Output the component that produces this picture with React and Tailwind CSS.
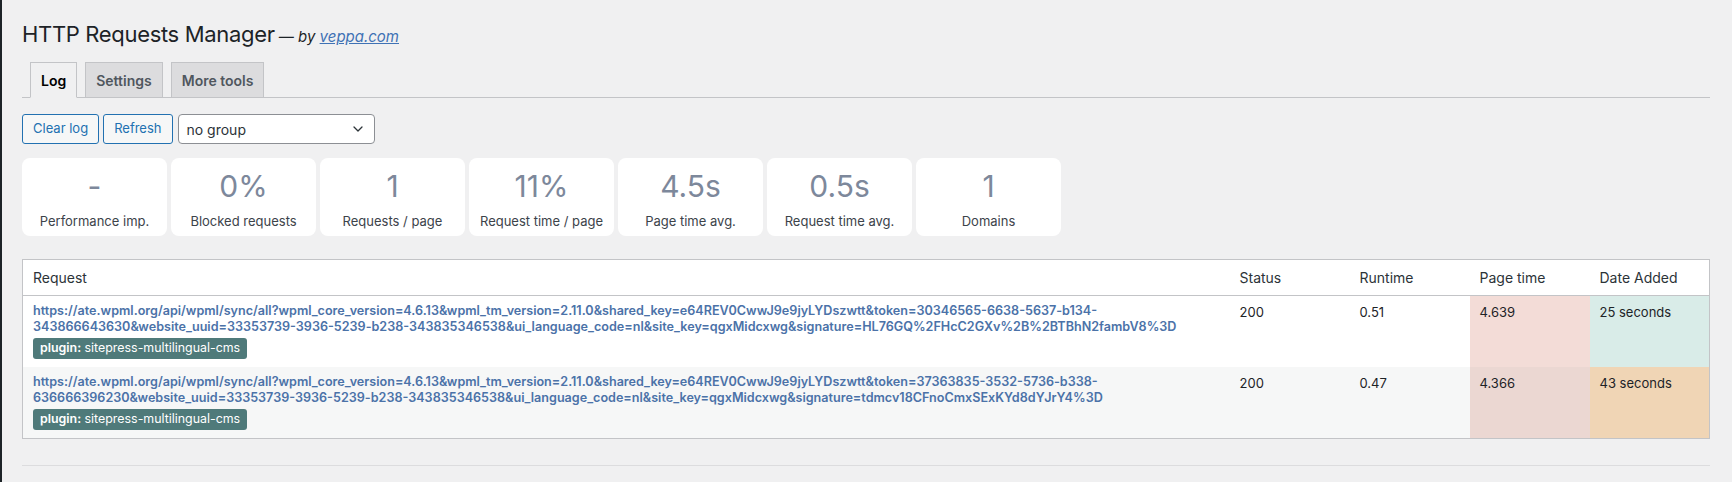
import React from "react";

const stats = [
  { value: "-", label: "Performance imp." },
  { value: "0%", label: "Blocked requests" },
  { value: "1", label: "Requests / page" },
  { value: "11%", label: "Request time / page" },
  { value: "4.5s", label: "Page time avg." },
  { value: "0.5s", label: "Request time avg." },
  { value: "1", label: "Domains" },
];

const rows = [
  {
    url1: "https://ate.wpml.org/api/wpml/sync/all?wpml_core_version=4.6.13&wpml_tm_version=2.11.0&shared_key=e64REV0CwwJ9e9jyLYDszwtt&token=30346565-6638-5637-b134-",
    url2: "343866643630&website_uuid=33353739-3936-5239-b238-343835346538&ui_language_code=nl&site_key=qgxMidcxwg&signature=HL76GQ%2FHcC2GXv%2B%2BTBhN2fambV8%3D",
    status: "200",
    runtime: "0.51",
    pageTime: "4.639",
    date: "25 seconds",
    rowBg: "bg-white",
    pageBg: "bg-[#f3dcd7]",
    dateBg: "bg-[#d9ece8]",
  },
  {
    url1: "https://ate.wpml.org/api/wpml/sync/all?wpml_core_version=4.6.13&wpml_tm_version=2.11.0&shared_key=e64REV0CwwJ9e9jyLYDszwtt&token=37363835-3532-5736-b338-",
    url2: "636666396230&website_uuid=33353739-3936-5239-b238-343835346538&ui_language_code=nl&site_key=qgxMidcxwg&signature=tdmcv18CFnoCmxSExKYd8dYJrY4%3D",
    status: "200",
    runtime: "0.47",
    pageTime: "4.366",
    date: "43 seconds",
    rowBg: "bg-[#f6f7f7]",
    pageBg: "bg-[#ebd7d2]",
    dateBg: "bg-[#f0d5b5]",
  },
];

const tabs = ["Log", "Settings", "More tools"];

export default function App() {
  return (
    <div className="flex min-h-[482px] bg-[#f0f0f1] font-[Inter,sans-serif] text-[#1d2327]">
      {/* admin menu edge */}
      <div className="w-[2px] shrink-0 bg-[#1d2327]" />

      <div className="flex-1 pl-[20px] pr-[22px] pt-[20px]">
        <h1 className="text-[22px] leading-[29px] font-normal tracking-[-0.015em]">
          HTTP Requests Manager
          <span className="text-[15px] italic tracking-normal">
            {" "}— by{" "}
            <a href="#" className="text-[#3f72b5] underline">
              veppa.com
            </a>
          </span>
        </h1>

        {/* Tabs */}
        <div className="mt-[11px] flex gap-[8px] border-b border-[#c3c4c7] pl-[8px]">
          {tabs.map((t, i) => (
            <div
              key={t}
              className={`-mb-px flex h-[36px] items-center border border-[#c3c4c7] px-[10px] text-[14px] font-semibold ${
                i === 0
                  ? "border-b-[#f0f0f1] bg-[#f0f0f1] text-black"
                  : "bg-[#dcdcde] text-[#50575e]"
              }`}
            >
              {t}
            </div>
          ))}
        </div>

        {/* Toolbar */}
        <div className="mt-[16px] flex items-center gap-[4px]">
          <button className="h-[30px] rounded-[3px] border border-[#2271b1] bg-[#f6f7f7] px-[10px] text-[13px] text-[#2271b1]">
            Clear log
          </button>
          <button className="h-[30px] rounded-[3px] border border-[#2271b1] bg-[#f6f7f7] px-[10px] text-[13px] text-[#2271b1]">
            Refresh
          </button>
          <div className="ml-[1px] flex h-[30px] w-[197px] items-center justify-between rounded-[4px] border border-[#8c8f94] bg-white pl-[8px] pr-[8px] text-[14px] text-[#2c3338]">
            <span>no group</span>
            <svg width="16" height="16" viewBox="0 0 20 20" fill="none">
              <path d="M5 7.5l5 5 5-5" stroke="#2c3338" strokeWidth="1.6" strokeLinecap="round" strokeLinejoin="round" />
            </svg>
          </div>
        </div>

        {/* Stats */}
        <div className="mt-[14px] flex gap-[4px]">
          {stats.map((s) => (
            <div key={s.label} className="flex h-[78px] w-[145px] flex-col items-center rounded-[8px] bg-white pt-[10px]">
              <div className="text-[30px] leading-[36px] text-[#7d889b]">{s.value}</div>
              <div className="mt-[8px] text-[13px] leading-[18px] text-[#3c434a]">{s.label}</div>
            </div>
          ))}
        </div>

        {/* Log table */}
        <table className="mt-[23px] w-full table-fixed border-collapse border border-[#c3c4c7] bg-white">
          <colgroup>
            <col />
            <col className="w-[120px]" />
            <col className="w-[120px]" />
            <col className="w-[120px]" />
            <col className="w-[120px]" />
          </colgroup>
          <thead>
            <tr className="border-b border-[#c3c4c7]">
              {["Request", "Status", "Runtime", "Page time", "Date Added"].map((h) => (
                <th key={h} className="px-[10px] py-[8px] text-left text-[14px] font-normal leading-[19px] text-[#2c3338]">
                  {h}
                </th>
              ))}
            </tr>
          </thead>
          <tbody>
            {rows.map((r, i) => (
              <tr key={i} className={r.rowBg}>
                <td className="px-[10px] pt-[7px] pb-[8px] align-top">
                  <a href="#" className="block text-[12.6px] font-semibold leading-[16px] text-[#4b72a8]">
                    {r.url1}
                    <br />
                    {r.url2}
                  </a>
                  <div className="mt-[3px] flex">
                    <span className="flex h-[21px] items-center rounded-[3px] bg-[#4f7a7a] px-[7px] text-[12.4px] text-white">
                      <b className="font-semibold">plugin:</b>&nbsp;sitepress-multilingual-cms
                    </span>
                  </div>
                </td>
                <td className="px-[10px] py-[8px] align-top text-[13px] leading-[16px] text-[#1d2327]">{r.status}</td>
                <td className="px-[10px] py-[8px] align-top text-[13px] leading-[16px] text-[#1d2327]">{r.runtime}</td>
                <td className={`px-[10px] py-[8px] align-top text-[13px] leading-[16px] text-[#1d2327] ${r.pageBg}`}>{r.pageTime}</td>
                <td className={`px-[10px] py-[8px] align-top text-[13px] leading-[16px] text-[#1d2327] ${r.dateBg}`}>{r.date}</td>
              </tr>
            ))}
          </tbody>
        </table>

        <div className="mt-[26px] border-t border-[#dcdcde]" />
      </div>
    </div>
  );
}
